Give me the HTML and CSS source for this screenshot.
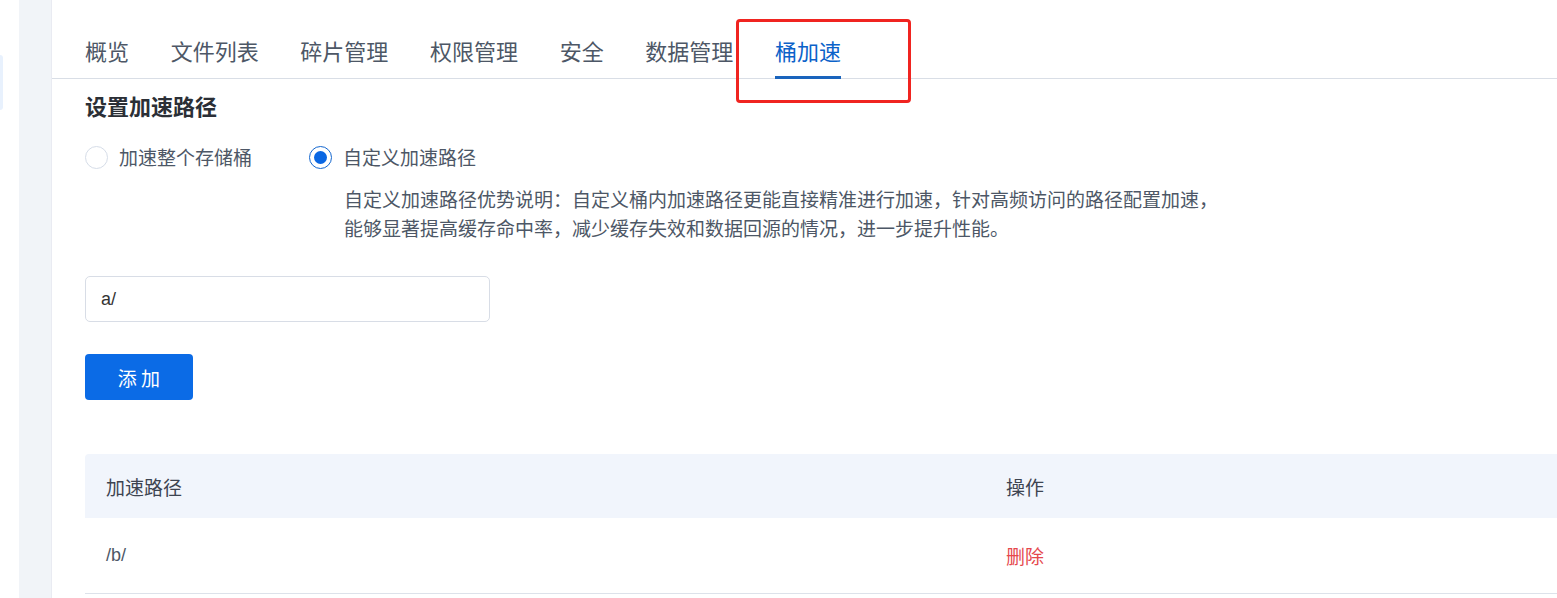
FILE: index.html
```html
<!DOCTYPE html>
<html lang="zh">
<head>
<meta charset="utf-8">
<link rel="stylesheet" href="styles.css">
</head>
<body>
<div class="page">
  <div class="side"><div class="side-mark"></div></div>
  <div class="rail"></div>
  <main class="main">
    <nav class="tabs">
      <span class="tab">概览</span>
      <span class="tab">文件列表</span>
      <span class="tab">碎片管理</span>
      <span class="tab">权限管理</span>
      <span class="tab">安全</span>
      <span class="tab">数据管理</span>
      <span class="tab active">桶加速</span>
      <div class="annot"></div>
    </nav>
    <section class="content">
      <h2 class="title">设置加速路径</h2>
      <div class="radios">
        <label class="radio"><span class="dot"></span><span>加速整个存储桶</span></label>
        <div class="radio-group">
          <label class="radio"><span class="dot checked"></span><span>自定义加速路径</span></label>
          <p class="desc">自定义加速路径优势说明：自定义桶内加速路径更能直接精准进行加速，针对高频访问的路径配置加速，<br>能够显著提高缓存命中率，减少缓存失效和数据回源的情况，进一步提升性能。</p>
        </div>
      </div>
      <div class="input">a/</div>
      <button class="btn">添 加</button>
      <div class="table">
        <div class="row head"><div class="c1">加速路径</div><div class="c2">操作</div></div>
        <div class="row"><div class="c1 mono">/b/</div><div class="c2 del">删除</div></div>
      </div>
    </section>
  </main>
</div>
</body>
</html>
```
FILE: styles.css
```css
* { box-sizing: border-box; }
html, body { margin: 0; padding: 0; background: #fff; }
body {
  font-family: "Noto Sans CJK SC", "Noto Sans", sans-serif;
  color: #333;
  width: 1557px;
  height: 598px;
  overflow: hidden;
}
.page { display: flex; height: 598px; }
.side { width: 19px; flex: none; padding-top: 55px; }
.side-mark { width: 3px; height: 55px; background: #e8f1fd; border-radius: 0 4px 4px 0; }
.rail { width: 33px; flex: none; background: #f1f4f8; border-right: 1px solid #e9ebf2; }
.main { flex: 1; min-width: 0; }
.tabs {
  position: relative;
  display: flex;
  height: 79px;
  border-bottom: 1px solid #d9dee6;
  padding-left: 33px;
  padding-top: 34px;
  align-items: flex-start;
}
.tab {
  font-size: 22px;
  line-height: 32px;
  color: #4d5766;
  margin-right: 41.67px;
  height: 45px;
  white-space: nowrap;
}
.tab.active {
  color: #0b62c9;
  border-bottom: 3px solid #1a64bd;
}
.annot {
  position: absolute;
  left: 684px;
  top: 19px;
  width: 175px;
  height: 84px;
  border: 3px solid #f02420;
  border-radius: 4px;
  z-index: 2;
}
.content { padding: 11px 0 0 33px; }
.title {
  margin: 0;
  font-size: 22px;
  font-weight: 700;
  color: #2b2f36;
  line-height: 30px;
}
.radios { display: flex; align-items: flex-start; margin-top: 23px; gap: 57px; }
.radio {
  display: flex;
  align-items: center;
  gap: 11px;
  font-size: 19px;
  color: #4d5766;
  line-height: 28px;
}
.dot {
  width: 23px;
  height: 23px;
  border-radius: 50%;
  border: 1px solid #d6dde8;
  background: #fff;
  display: flex;
  align-items: center;
  justify-content: center;
  flex: none;
}
.dot.checked { border-color: #1467cf; }
.dot.checked::after {
  content: "";
  width: 13px;
  height: 13px;
  border-radius: 50%;
  background: #0a67e3;
}
.desc {
  margin: 13px 0 0 35px;
  font-size: 19px;
  line-height: 29px;
  color: #4d5766;
}
.input {
  margin-top: 34px;
  width: 405px;
  height: 46px;
  border: 1px solid #d8dde6;
  border-radius: 5px;
  padding: 0 15px;
  font-family: "Liberation Sans", "Noto Sans CJK SC", sans-serif;
  font-size: 18px;
  line-height: 44px;
  color: #333;
}
.btn {
  display: block;
  margin-top: 32px;
  width: 108px;
  height: 46px;
  border: none;
  border-radius: 4px;
  background: #0b6be6;
  color: #fff;
  font-family: "Noto Sans CJK SC", sans-serif;
  font-size: 19px;
  padding: 0;
}
.table { margin-top: 54px; }
.row {
  display: flex;
  height: 76px;
  align-items: center;
  border-bottom: 1px solid #dde2ea;
  font-size: 19px;
  color: #4d5766;
}
.row.head {
  height: 64px;
  background: #f1f5fc;
  border-bottom: none;
  border-radius: 4px 0 0 0;
  color: #3d4451;
}
.c1 { width: 921px; padding-left: 21px; }
.c1.mono { font-family: "Liberation Sans", "Noto Sans CJK SC", sans-serif; font-size: 18px; }
.c2 { flex: 1; }
.del { color: #e5484d; }
```
